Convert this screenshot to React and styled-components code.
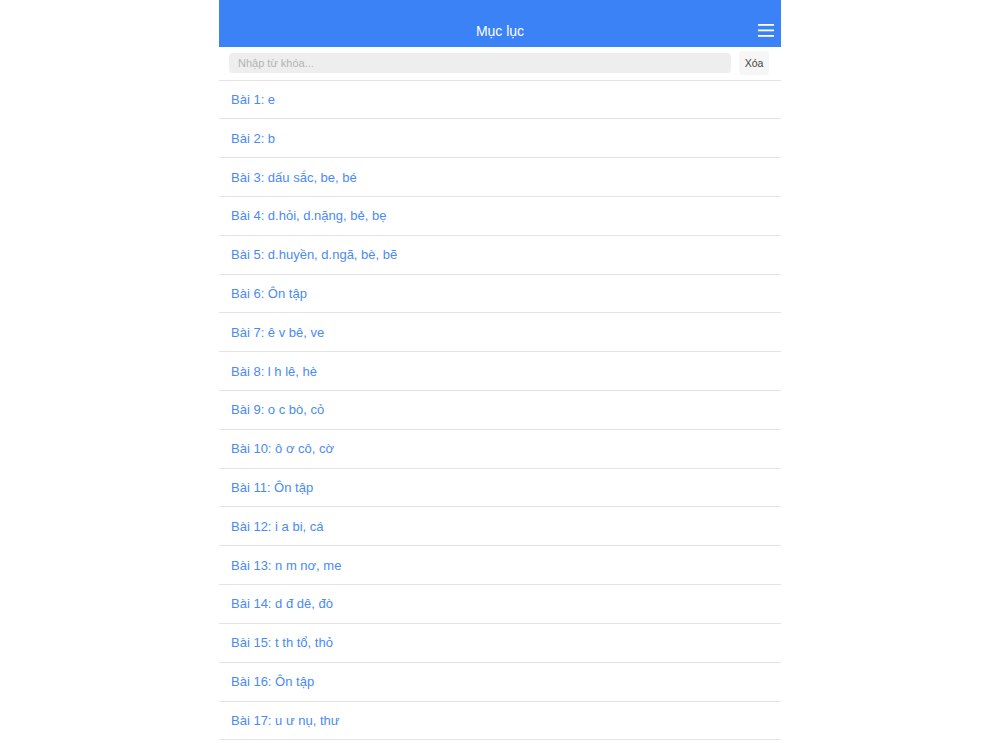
import styled, { createGlobalStyle } from "styled-components";

const lessons = [
  "Bài 1: e",
  "Bài 2: b",
  "Bài 3: dấu sắc, be, bé",
  "Bài 4: d.hỏi, d.nặng, bẻ, bẹ",
  "Bài 5: d.huyền, d.ngã, bè, bẽ",
  "Bài 6: Ôn tập",
  "Bài 7: ê v bê, ve",
  "Bài 8: l h lê, hè",
  "Bài 9: o c bò, cỏ",
  "Bài 10: ô ơ cô, cờ",
  "Bài 11: Ôn tập",
  "Bài 12: i a bi, cá",
  "Bài 13: n m nơ, me",
  "Bài 14: d đ dê, đò",
  "Bài 15: t th tổ, thỏ",
  "Bài 16: Ôn tập",
  "Bài 17: u ư nụ, thư",
];

const GlobalStyle = createGlobalStyle`
  body {
    margin: 0;
    background: #ffffff;
    font-family: "Liberation Sans", Arial, sans-serif;
  }
`;

const App = () => {
  return (
    <>
      <GlobalStyle />
      <Page>
        <Header>
          <Title>Mục lục</Title>
          <MenuButton aria-label="menu">
            <svg width="16" height="13" viewBox="0 0 16 13">
              <rect x="0" y="0" width="16" height="1.8" fill="#fff" />
              <rect x="0" y="5.5" width="16" height="1.8" fill="#fff" />
              <rect x="0" y="11" width="16" height="1.8" fill="#fff" />
            </svg>
          </MenuButton>
        </Header>

        <SearchBar>
          <SearchInput type="text" placeholder="Nhập từ khóa..." />
          <ClearButton>Xóa</ClearButton>
        </SearchBar>

        <List>
          {lessons.map((title) => (
            <Item key={title}>
              <ItemLink href="#">{title}</ItemLink>
            </Item>
          ))}
        </List>
      </Page>
    </>
  );
};

const Page = styled.div`
  width: 562px;
  margin: 0 auto;
  background: #ffffff;
`;

const Header = styled.header`
  position: relative;
  height: 47px;
  box-sizing: border-box;
  padding-top: 16px;
  background-color: #3a82f5;
  display: flex;
  align-items: center;
  justify-content: center;
`;

const Title = styled.h1`
  margin: 0;
  font-size: 14px;
  font-weight: normal;
  color: #ffffff;
  line-height: 31px;
`;

const MenuButton = styled.button`
  position: absolute;
  right: 7px;
  top: 24px;
  width: 16px;
  height: 13px;
  padding: 0;
  border: none;
  background: transparent;
  display: flex;
  &:hover {
    cursor: pointer;
  }
`;

const SearchBar = styled.div`
  height: 33.5px;
  box-sizing: border-box;
  display: flex;
  align-items: center;
  gap: 8px;
  padding: 0 12px 1px 10px;
  border-bottom: 1px solid #e4e4e4;
`;

const SearchInput = styled.input`
  flex: 1;
  height: 20px;
  box-sizing: border-box;
  padding: 0 9px;
  border: none;
  border-radius: 4px;
  background-color: #eeeeee;
  font-family: "Liberation Sans", Arial, sans-serif;
  font-size: 11px;
  color: #333;
  &::placeholder {
    color: #b3b3b3;
  }
  &:focus-visible {
    outline: none;
  }
`;

const ClearButton = styled.button`
  width: 30px;
  height: 24px;
  padding: 0;
  border: none;
  border-radius: 4px;
  background-color: #f6f6f6;
  color: #444;
  font-family: "Liberation Sans", Arial, sans-serif;
  font-size: 10.5px;
`;

const List = styled.ul`
  margin: 0;
  padding: 0;
  list-style: none;
`;

const Item = styled.li`
  height: 38.82px;
  box-sizing: border-box;
  display: flex;
  align-items: center;
  padding-left: 12px;
  border-bottom: 1px solid #e4e4e4;
`;

const ItemLink = styled.a`
  font-size: 13px;
  color: #4a8af5;
  text-decoration: none;
`;

export default App;
